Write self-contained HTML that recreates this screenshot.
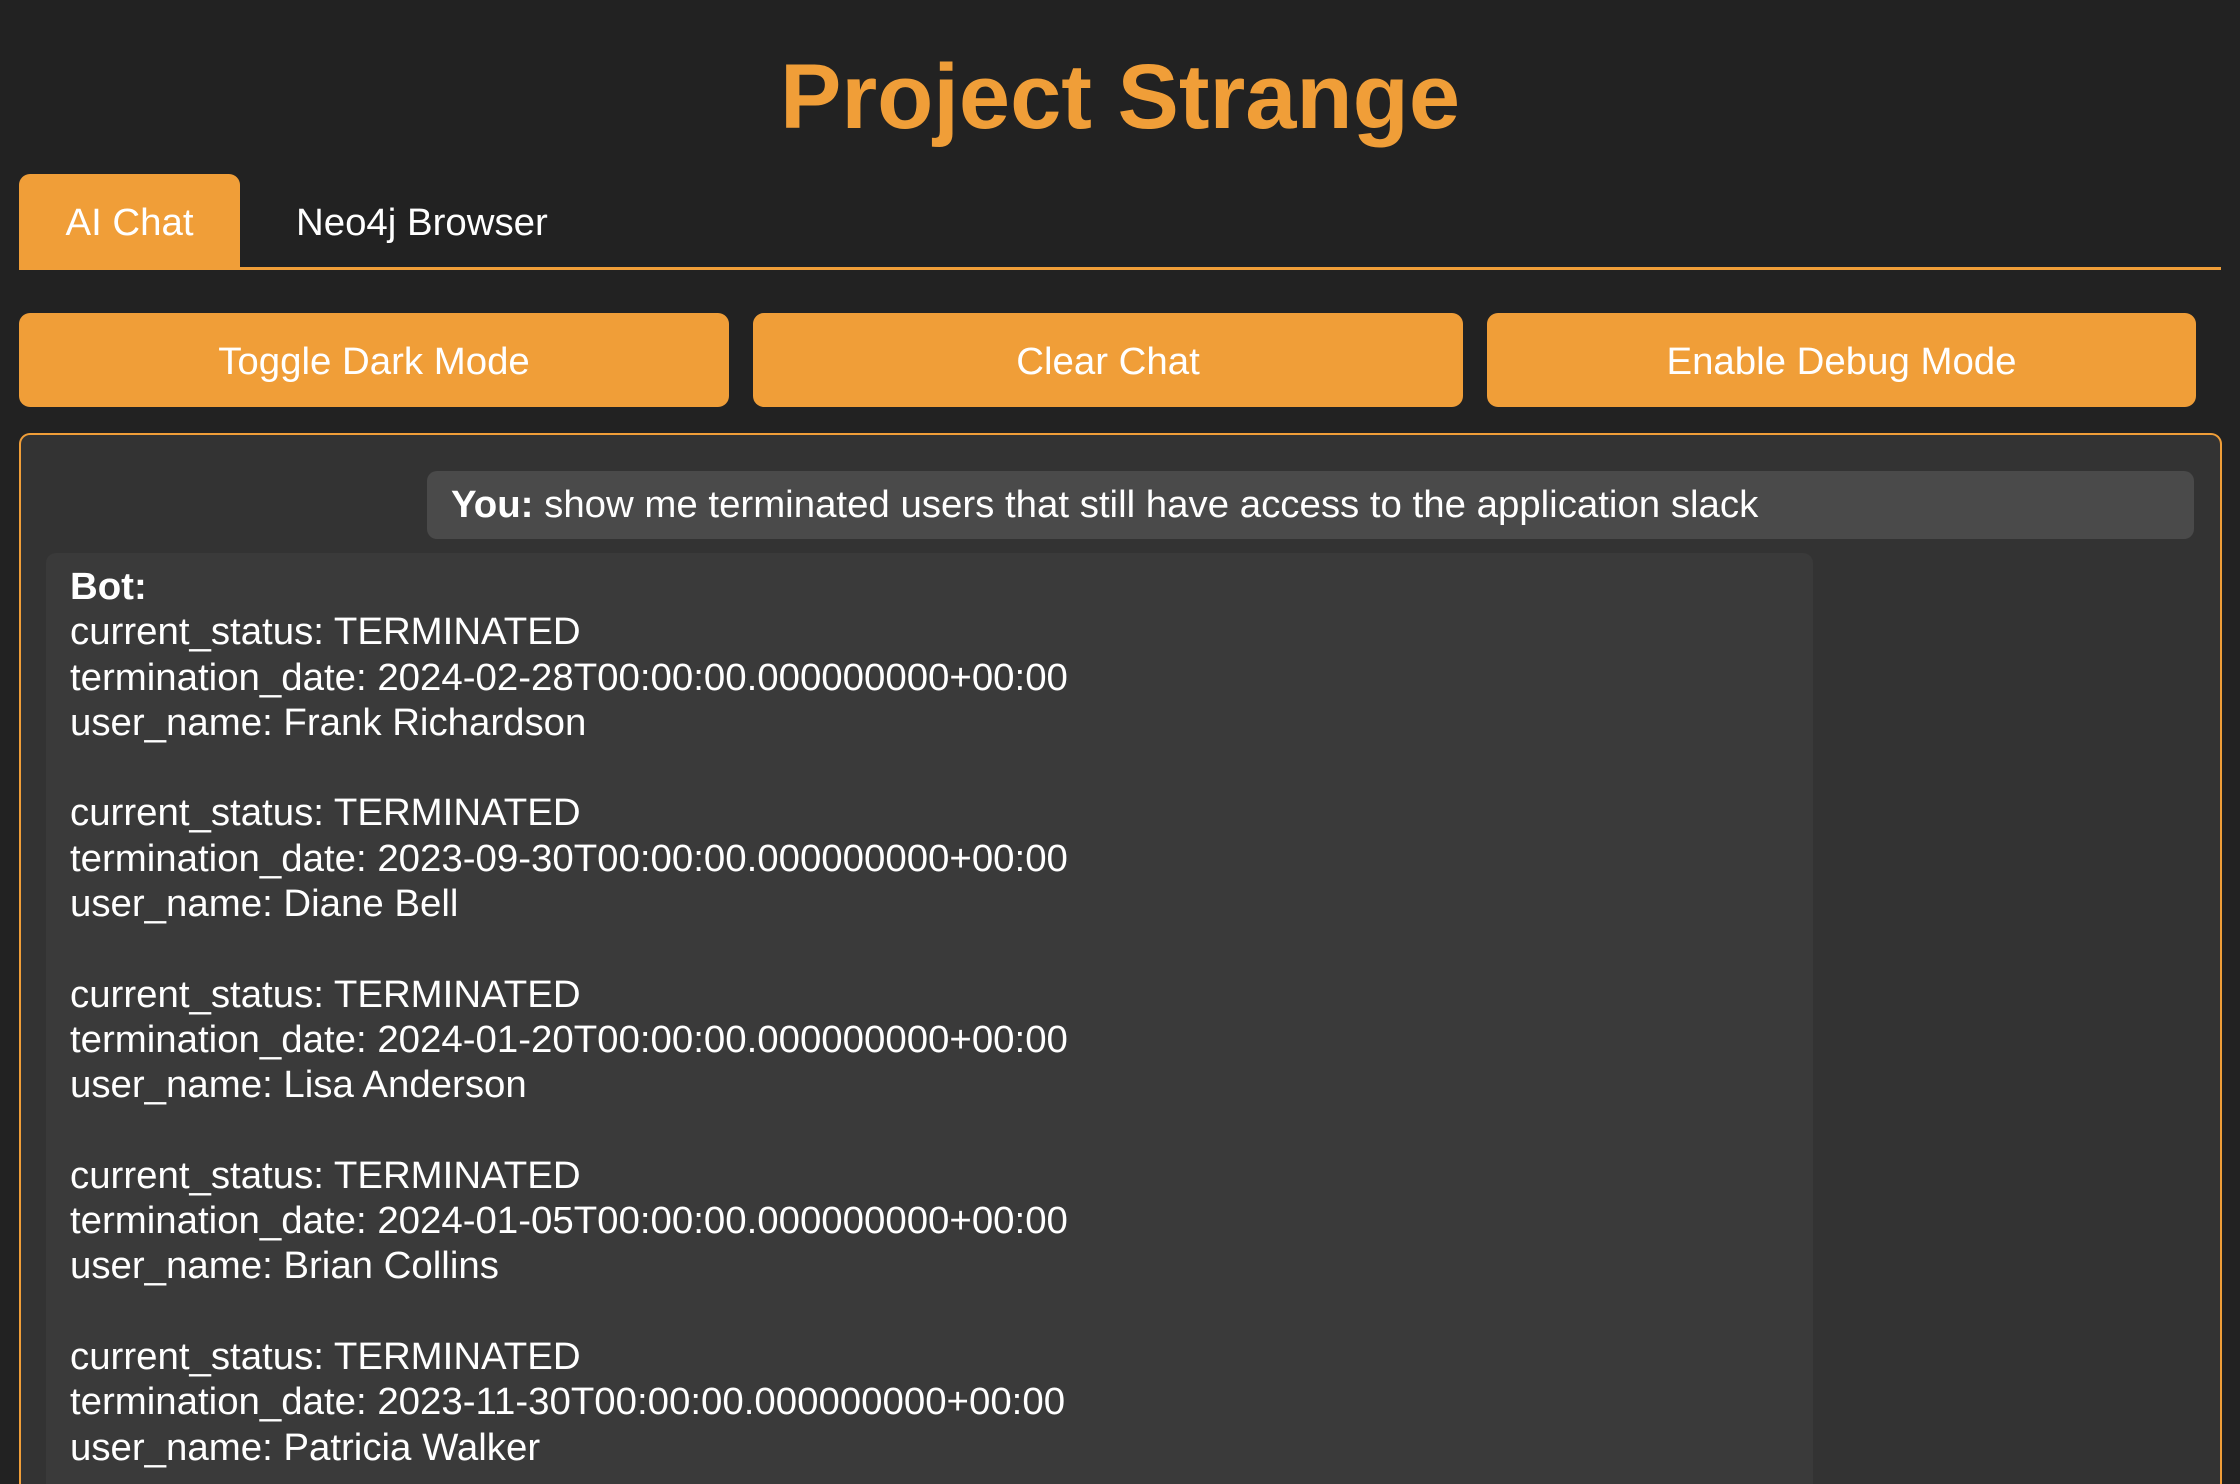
<!DOCTYPE html>
<html><head><meta charset="utf-8"><style>
html,body{margin:0;padding:0;background:#222222;width:2240px;height:1484px;overflow:hidden;font-family:"Liberation Sans",Arial,sans-serif;color:#fff}
#wrap{position:relative;width:2240px;height:1484px;overflow:hidden}
.title{position:absolute;left:0;width:2240px;top:42px;text-align:center;font-weight:bold;font-size:92px;line-height:110px;color:#f09e38}
.tab{position:absolute;top:174px;height:95px;line-height:97px;font-size:38.4px;color:#fff}
.tab1{left:19px;width:221px;background:#f09e38;border-radius:11px 11px 0 0;text-align:center}
.tab2{left:296px}
.uline{position:absolute;left:19px;width:2202px;top:267px;height:3px;background:#f09e38}
.btn{position:absolute;top:313px;height:94px;line-height:97px;background:#f09e38;border-radius:11px;text-align:center;font-size:38.4px;color:#fff}
.box{position:absolute;left:19px;top:433px;width:2199px;height:1049px;border:2px solid #f09e38;border-bottom:none;border-radius:11px 11px 0 0;background:#333333}
.you{position:absolute;left:427px;top:471px;width:1767px;height:68px;background:#4a4a4a;border-radius:10px;font-size:38.4px;line-height:68px;box-sizing:border-box;padding-left:24px;white-space:nowrap}
.bot{position:absolute;left:46px;top:553px;width:1767px;height:931px;overflow:hidden;background:#3a3a3a;border-radius:10px 10px 0 0;box-sizing:border-box;padding:11px 24px;font-size:38.4px;line-height:45.3px;white-space:pre}
</style></head><body><div id="wrap">
<div class="title">Project Strange</div>
<div class="tab tab1">AI Chat</div>
<div class="tab tab2">Neo4j Browser</div>
<div class="uline"></div>
<div class="btn" style="left:19px;width:710px">Toggle Dark Mode</div>
<div class="btn" style="left:753px;width:710px">Clear Chat</div>
<div class="btn" style="left:1487px;width:709px">Enable Debug Mode</div>
<div class="box"></div>
<div class="you"><b>You:</b> show me terminated users that still have access to the application slack</div>
<div class="bot"><b>Bot:</b>
current_status: TERMINATED
termination_date: 2024-02-28T00:00:00.000000000+00:00
user_name: Frank Richardson

current_status: TERMINATED
termination_date: 2023-09-30T00:00:00.000000000+00:00
user_name: Diane Bell

current_status: TERMINATED
termination_date: 2024-01-20T00:00:00.000000000+00:00
user_name: Lisa Anderson

current_status: TERMINATED
termination_date: 2024-01-05T00:00:00.000000000+00:00
user_name: Brian Collins

current_status: TERMINATED
termination_date: 2023-11-30T00:00:00.000000000+00:00
user_name: Patricia Walker</div>
</div></body></html>
